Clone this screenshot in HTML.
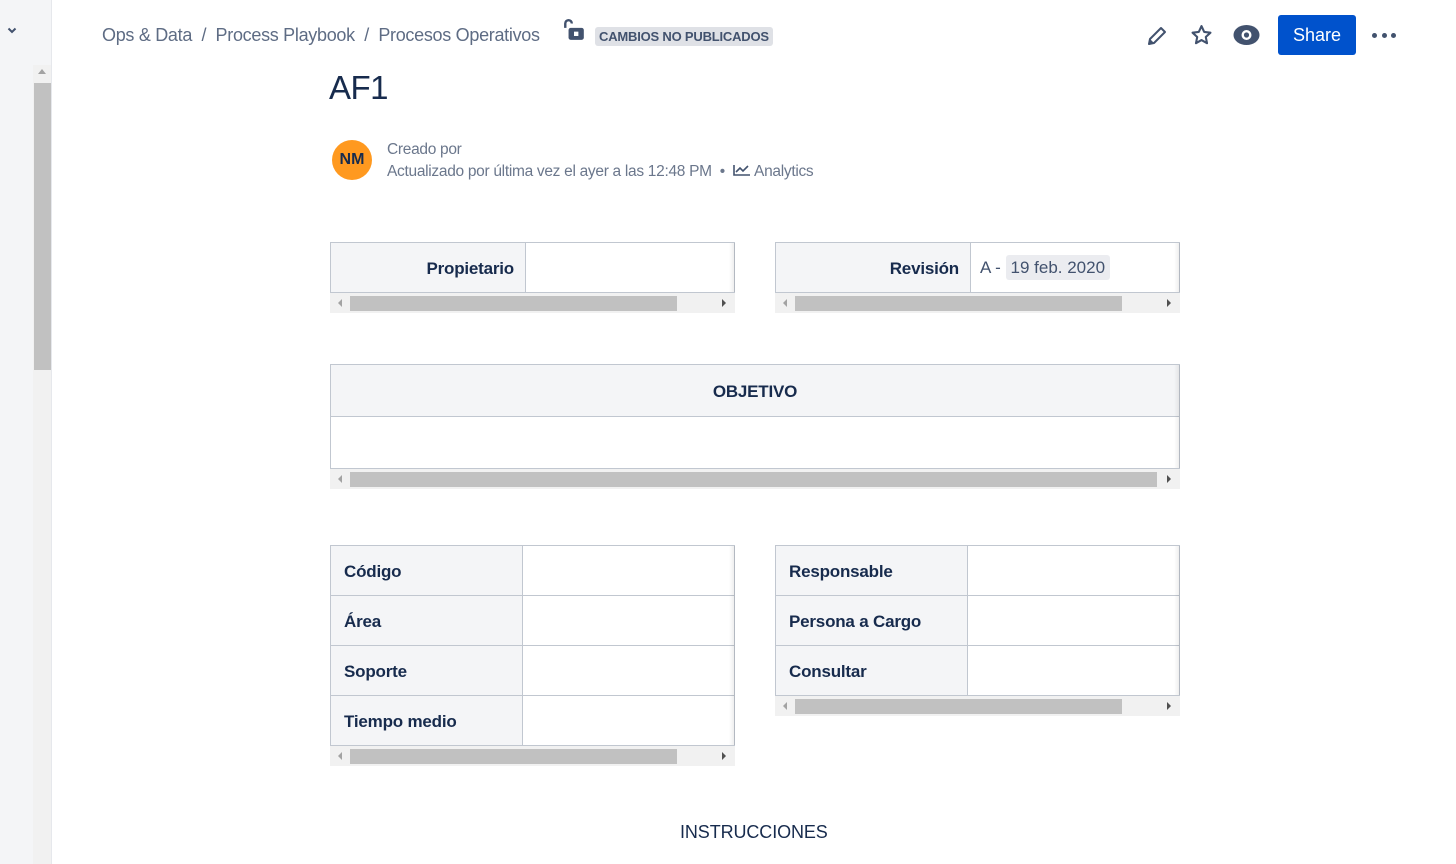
<!DOCTYPE html>
<html><head><meta charset="utf-8"><style>
*{box-sizing:border-box;margin:0;padding:0}
body{width:1456px;height:864px;overflow:hidden;background:#fff;font-family:"Liberation Sans",sans-serif;color:#172b4d;position:relative}
.a{position:absolute}
.side{left:0;top:0;width:52px;height:864px;background:#f4f5f7;border-right:1px solid #e6e8ec}
.bc{top:25px;font-size:18px;color:#5e6c84;letter-spacing:-0.3px}
.cell{position:absolute;border:1px solid #c1c7d0;}
.th{background:#f4f5f7;font-weight:bold;font-size:17px;letter-spacing:-0.2px}
.sb{position:absolute;height:20px;background:#f1f1f1}
.sb .t{position:absolute;top:3px;height:15px;background:#c1c1c1}
.sb .l,.sb .r{position:absolute;top:6px;width:0;height:0;border-top:4px solid transparent;border-bottom:4px solid transparent}
.sb .l{left:8px;border-right:4px solid #a3a3a3}
.sb .r{right:9px;border-left:4px solid #505050}
.shadow{position:absolute;width:6px;background:linear-gradient(to right,rgba(0,0,0,0),rgba(0,0,0,0.08))}
</style></head><body>
<div class="a side"></div>
<div class="a" style="left:6px;top:24px;font-size:12px;color:#42526e">
<svg width="12" height="12" viewBox="0 0 12 12"><path d="M2.5 4.5 L6 8 L9.5 4.5" stroke="#42526e" stroke-width="2" fill="none"/></svg></div>
<div class="a" style="left:33px;top:65px;width:18px;height:799px;background:#f1f1f1"></div>
<div class="a" style="left:38px;top:69px;width:0;height:0;border-left:4px solid transparent;border-right:4px solid transparent;border-bottom:5px solid #a3a3a3"></div>
<div class="a" style="left:34px;top:83px;width:17px;height:287px;background:#c1c1c1"></div>

<div class="a bc" style="left:102px">Ops &amp; Data &nbsp;/&nbsp; Process Playbook &nbsp;/&nbsp; Procesos Operativos</div>
<svg class="a" style="left:562px;top:18px" width="24" height="24" viewBox="0 0 22 22"><path d="M3 9V5a3 3 0 0 1 6 0" stroke="#42526e" stroke-width="2.2" fill="none"/><rect x="6" y="9" width="14" height="11" rx="2" fill="#42526e"/><rect x="11" y="12.5" width="4" height="4" fill="#fff"/></svg>
<div class="a" style="left:595px;top:27px;height:19px;padding:0 4px;background:#dfe1e6;border-radius:3px;font-size:13px;font-weight:bold;color:#42526e;line-height:19px;letter-spacing:-0.2px">CAMBIOS NO PUBLICADOS</div>

<svg class="a" style="left:1145px;top:24px" width="24" height="24" viewBox="0 0 24 24"><path d="M4 20l1-5L16 4l4 4L9 19z" stroke="#42526e" stroke-width="2" fill="none" stroke-linejoin="round"/><path d="M4 20l1-5 4 4z" fill="#42526e"/></svg>
<svg class="a" style="left:1189px;top:23px" width="25" height="25" viewBox="0 0 24 24"><path d="M12 3l2.6 5.6 6 .7-4.5 4.1 1.2 6L12 16.4 6.7 19.4l1.2-6L3.4 9.3l6-.7z" stroke="#42526e" stroke-width="2" fill="none" stroke-linejoin="round"/></svg>
<svg class="a" style="left:1233px;top:23px" width="27" height="24" viewBox="0 0 27 24"><ellipse cx="13.5" cy="12" rx="13" ry="10" fill="#42526e"/><circle cx="13.5" cy="12" r="5" fill="#fff"/><circle cx="13.5" cy="12" r="2.6" fill="#42526e"/></svg>
<div class="a" style="left:1278px;top:15px;width:78px;height:40px;background:#0052cc;border-radius:3px;color:#fff;font-size:18px;text-align:center;line-height:40px">Share</div>
<div class="a" style="left:1372px;top:33px;width:5px;height:5px;border-radius:50%;background:#42526e"></div>
<div class="a" style="left:1382px;top:33px;width:5px;height:5px;border-radius:50%;background:#42526e"></div>
<div class="a" style="left:1391px;top:33px;width:5px;height:5px;border-radius:50%;background:#42526e"></div>

<div class="a" style="left:329px;top:69px;font-size:33px;color:#172b4d;letter-spacing:-0.5px">AF1</div>
<div class="a" style="left:332px;top:140px;width:40px;height:40px;border-radius:50%;background:#ff991f;color:#172b4d;font-size:16px;font-weight:bold;text-align:center;line-height:40px">NM</div>
<div class="a" style="left:387px;top:141px;font-size:15.5px;color:#6b778c;letter-spacing:-0.3px">Creado por</div>
<div class="a" style="left:387px;top:163px;font-size:15.5px;color:#6b778c;letter-spacing:-0.3px">Actualizado por última vez el ayer a las 12:48 PM &nbsp;•&nbsp; <svg width="18" height="12" viewBox="0 0 18 12" style="vertical-align:0"><path d="M1 1v10h16M3 8l4-4 3 3 5-5" stroke="#42526e" stroke-width="1.6" fill="none"/></svg> Analytics</div>

<!-- Propietario -->
<div class="cell th" style="left:330px;top:242px;width:196px;height:51px;text-align:right;padding-right:11px;line-height:51px">Propietario</div>
<div class="cell" style="left:525px;top:242px;width:210px;height:51px;border-left:none"></div>
<div class="shadow" style="left:729px;top:243px;height:49px"></div>
<div class="sb" style="left:330px;top:293px;width:405px"><div class="l"></div><div class="t" style="left:20px;width:327px"></div><div class="r"></div></div>

<div class="cell th" style="left:775px;top:242px;width:196px;height:51px;text-align:right;padding-right:11px;line-height:51px">Revisión</div>
<div class="cell" style="left:970px;top:242px;width:210px;height:51px;border-left:none;font-size:17px;color:#42526e;padding:15px 0 0 10px">A - <span style="background:#ebecf0;border-radius:3px;padding:3px 5px">19 feb. 2020</span></div>
<div class="shadow" style="left:1174px;top:243px;height:49px"></div>
<div class="sb" style="left:775px;top:293px;width:405px"><div class="l"></div><div class="t" style="left:20px;width:327px"></div><div class="r"></div></div>

<!-- Objetivo -->
<div class="cell th" style="left:330px;top:364px;width:850px;height:53px;text-align:center;line-height:53px">OBJETIVO</div>
<div class="cell" style="left:330px;top:416px;width:850px;height:53px"></div>
<div class="shadow" style="left:1174px;top:365px;height:103px"></div>
<div class="sb" style="left:330px;top:469px;width:850px"><div class="l"></div><div class="t" style="left:20px;width:807px"></div><div class="r"></div></div>

<!-- left table -->
<div class="cell th" style="left:330px;top:545px;width:193px;height:51px;padding-left:13px;line-height:51px">Código</div>
<div class="cell th" style="left:330px;top:595px;width:193px;height:51px;padding-left:13px;line-height:51px">Área</div>
<div class="cell th" style="left:330px;top:645px;width:193px;height:51px;padding-left:13px;line-height:51px">Soporte</div>
<div class="cell th" style="left:330px;top:695px;width:193px;height:51px;padding-left:13px;line-height:51px">Tiempo medio</div>
<div class="cell" style="left:522px;top:545px;width:213px;height:51px;border-left:none"></div>
<div class="cell" style="left:522px;top:595px;width:213px;height:51px;border-left:none"></div>
<div class="cell" style="left:522px;top:645px;width:213px;height:51px;border-left:none"></div>
<div class="cell" style="left:522px;top:695px;width:213px;height:51px;border-left:none"></div>
<div class="shadow" style="left:729px;top:546px;height:199px"></div>
<div class="sb" style="left:330px;top:746px;width:405px"><div class="l"></div><div class="t" style="left:20px;width:327px"></div><div class="r"></div></div>

<!-- right table -->
<div class="cell th" style="left:775px;top:545px;width:193px;height:51px;padding-left:13px;line-height:51px">Responsable</div>
<div class="cell th" style="left:775px;top:595px;width:193px;height:51px;padding-left:13px;line-height:51px">Persona a Cargo</div>
<div class="cell th" style="left:775px;top:645px;width:193px;height:51px;padding-left:13px;line-height:51px">Consultar</div>
<div class="cell" style="left:967px;top:545px;width:213px;height:51px;border-left:none"></div>
<div class="cell" style="left:967px;top:595px;width:213px;height:51px;border-left:none"></div>
<div class="cell" style="left:967px;top:645px;width:213px;height:51px;border-left:none"></div>
<div class="shadow" style="left:1174px;top:546px;height:149px"></div>
<div class="sb" style="left:775px;top:696px;width:405px"><div class="l"></div><div class="t" style="left:20px;width:327px"></div><div class="r"></div></div>

<div class="a" style="left:680px;top:822px;font-size:18px;color:#172b4d;letter-spacing:-0.1px">INSTRUCCIONES</div>
</body></html>
